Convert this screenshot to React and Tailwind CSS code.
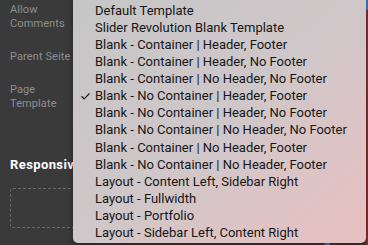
import { Check } from "lucide-react";

const items = [
  "Default Template",
  "Slider Revolution Blank Template",
  "Blank - Container | Header, Footer",
  "Blank - Container | Header, No Footer",
  "Blank - Container | No Header, No Footer",
  "Blank - No Container | Header, Footer",
  "Blank - No Container | Header, No Footer",
  "Blank - No Container | No Header, No Footer",
  "Blank - Container | No Header, Footer",
  "Blank - No Container | No Header, Footer",
  "Layout - Content Left, Sidebar Right",
  "Layout - Fullwidth",
  "Layout - Portfolio",
  "Layout - Sidebar Left, Content Right",
];

const App = () => {
  return (
    <div className="relative w-[368px] h-[245px] overflow-hidden bg-[#3a3a3a] font-['Roboto',sans-serif]">
      {/* Settings panel underneath */}
      <div className="flex flex-col pl-[10px] pt-[3px] text-[11px] leading-[14px] text-[#8e8e8e] tracking-[0.1px]">
        <div>
          <div>Allow</div>
          <div>Comments</div>
        </div>
        <div className="mt-[19px]">Parent Seite</div>
        <div className="mt-[19px]">
          <div>Page</div>
          <div>Template</div>
        </div>
        <div className="mt-[47px] text-[13px] font-bold text-white tracking-[0.4px]">Responsive</div>
        <div className="mt-[16px] w-[240px] h-[40px] rounded-[3px] border border-dashed border-[#6a6a6a]"></div>
      </div>

      {/* right edge strip */}
      <div className="absolute right-0 top-0 w-[2px] h-full bg-[#8f2e31]">
        <div className="h-[10px] bg-[#2b86d6]"></div>
      </div>
      <div className="absolute left-[325px] bottom-0 w-[5px] h-[2px] bg-[#2b86d6]"></div>

      {/* Dropdown menu */}
      <div className="absolute left-[73px] top-[-6px] w-[293px] h-[249px] rounded-[5px] bg-gradient-to-br from-[#c6c6c6] via-[#cfc7c9] to-[#e9c0c1] shadow-[0_2px_6px_rgba(0,0,0,0.4)] pt-[8px]">
        {items.map((item, i) => (
          <div key={i} className="relative h-[17.1px] flex items-center pl-[22px] text-[13px] text-[#161616] whitespace-nowrap">
            {i === 5 && (
              <Check size={11} strokeWidth={2.5} className="absolute left-[7px] text-[#161616]" />
            )}
            {item}
          </div>
        ))}
      </div>
    </div>
  );
};

export default App;
